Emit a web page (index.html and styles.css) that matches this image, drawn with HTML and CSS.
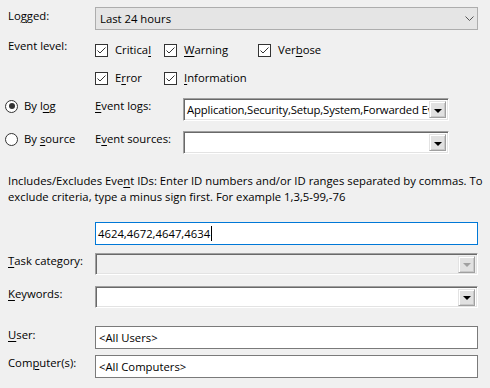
FILE: index.html
```html
<!DOCTYPE html>
<html>
<head>
<meta charset="utf-8">
<link rel="stylesheet" href="styles.css">
</head>
<body>
<div class="dlg">
  <div class="row row-logged">
    <div class="lbl">Lo<u>g</u>ged:</div>
    <div class="flat-select">
      <span class="val">Last 24 hours</span>
      <svg class="chev" width="9" height="5" viewBox="0 0 9 5"><path d="M0.5 0.5 L4.5 4.5 L8.5 0.5" fill="none" stroke="#555" stroke-width="1"/></svg>
    </div>
  </div>

  <div class="row row-level">
    <div class="lbl">Event level:</div>
    <div class="checks">
      <div class="chk"><span class="box"><svg width="11" height="11" viewBox="0 0 11 11"><path d="M1.5 5.5 L4 8 L9.5 2.5" fill="none" stroke="#333" stroke-width="1"/></svg></span><span>Critica<u>l</u></span></div>
      <div class="chk"><span class="box"><svg width="11" height="11" viewBox="0 0 11 11"><path d="M1.5 5.5 L4 8 L9.5 2.5" fill="none" stroke="#333" stroke-width="1"/></svg></span><span><u>W</u>arning</span></div>
      <div class="chk"><span class="box"><svg width="11" height="11" viewBox="0 0 11 11"><path d="M1.5 5.5 L4 8 L9.5 2.5" fill="none" stroke="#333" stroke-width="1"/></svg></span><span>Ver<u>b</u>ose</span></div>
      <div class="chk"><span class="box"><svg width="11" height="11" viewBox="0 0 11 11"><path d="M1.5 5.5 L4 8 L9.5 2.5" fill="none" stroke="#333" stroke-width="1"/></svg></span><span>E<u>r</u>ror</span></div>
      <div class="chk"><span class="box"><svg width="11" height="11" viewBox="0 0 11 11"><path d="M1.5 5.5 L4 8 L9.5 2.5" fill="none" stroke="#333" stroke-width="1"/></svg></span><span><u>I</u>nformation</span></div>
    </div>
  </div>

  <div class="src-grid">
    <div class="radio"><span class="circ on"></span><span>By l<u>o</u>g</span></div>
    <div class="lbl2"><u>E</u>vent logs:</div>
    <div class="combo3d"><span class="val clip tight">Application,Security,Setup,System,Forwarded Events</span><span class="btn3d"><span class="tri"></span></span></div>

    <div class="radio"><span class="circ"></span><span>By <u>s</u>ource</span></div>
    <div class="lbl2">E<u>v</u>ent sources:</div>
    <div class="combo3d"><span class="val clip"></span><span class="btn3d"><span class="tri"></span></span></div>
  </div>

  <p class="desc">Includes/Excludes Eve<u>n</u>t IDs: Enter ID numbers and/or ID ranges separated by commas. To<br>exclude criteria, type a minus sign first. For example 1,3,5-99,-76</p>

  <div class="row row-ids">
    <div class="lbl"></div>
    <div class="textbox focus"><span class="val">4624,4672,4647,4634</span><span class="caret"></span></div>
  </div>

  <div class="row row-task">
    <div class="lbl"><u>T</u>ask category:</div>
    <div class="combo3d disabled"><span class="val clip"></span><span class="btn3d"><span class="tri"></span></span></div>
  </div>

  <div class="row row-kw">
    <div class="lbl"><u>K</u>eywords:</div>
    <div class="combo3d"><span class="val clip"></span><span class="btn3d"><span class="tri"></span></span></div>
  </div>

  <div class="row row-user">
    <div class="lbl"><u>U</u>ser:</div>
    <div class="textbox"><span class="val">&lt;All Users&gt;</span></div>
  </div>

  <div class="row row-comp">
    <div class="lbl">Com<u>p</u>uter(s):</div>
    <div class="textbox"><span class="val">&lt;All Computers&gt;</span></div>
  </div>
</div>
</body>
</html>
```

FILE: styles.css
```css
html, body {
  margin: 0;
  padding: 0;
  background: #f0f0f0;
}
body {
  font-family: "Open Sans", "Noto Sans", sans-serif;
  font-size: 11.3px;
  color: #000;
}
u {
  text-decoration-thickness: 1px;
  text-underline-offset: 1.5px;
}
.dlg {
  width: 470px;
  padding: 7px 12px 0 8px;
  display: flex;
  flex-direction: column;
}
.row {
  display: flex;
  align-items: flex-start;
}
.lbl {
  width: 87px;
  flex: none;
  line-height: 16px;
  white-space: nowrap;
}
.row-logged .lbl { margin-top: 1px; }

.flat-select {
  flex: 1;
  height: 23px;
  box-sizing: border-box;
  border: 1px solid #adadad;
  background: #e5e5e5;
  display: flex;
  align-items: center;
  padding: 0 3px 0 4px;
}
.flat-select .val { flex: 1; }
.chev { display: block; }

.row-level { margin-top: 8px; }
.checks {
  flex: 1;
  display: grid;
  grid-template-columns: 69px 94px 1fr;
  row-gap: 12px;
  padding-top: 4px;
}
.chk {
  display: flex;
  align-items: center;
  height: 16px;
  line-height: 16px;
  white-space: nowrap;
}
.box {
  width: 13px;
  height: 13px;
  box-sizing: border-box;
  border: 1px solid #333;
  background: #fff;
  margin-right: 7px;
  display: flex;
  align-items: center;
  justify-content: center;
}
.box svg { display: block; }

.src-grid {
  margin-top: 12px;
  margin-left: -3px;
  display: grid;
  grid-template-columns: 90px 88px 266px;
  grid-template-rows: 23px 23px;
  row-gap: 10px;
}
.radio {
  display: flex;
  align-items: center;
  height: 16px;
  line-height: 16px;
  white-space: nowrap;
}
.circ {
  width: 13px;
  height: 13px;
  box-sizing: border-box;
  border: 1px solid #333;
  border-radius: 50%;
  background: #fff;
  margin-right: 6px;
  position: relative;
  flex: none;
}
.circ.on::after {
  content: "";
  position: absolute;
  left: 2.5px;
  top: 2.5px;
  width: 6px;
  height: 6px;
  border-radius: 50%;
  background: #333;
}
.lbl2 {
  line-height: 16px;
  white-space: nowrap;
}

.combo3d {
  height: 23px;
  box-sizing: border-box;
  border-style: solid;
  border-width: 1px;
  border-color: #a0a0a0 #fff #fff #a0a0a0;
  box-shadow: inset 1px 1px 0 #696969, inset -1px -1px 0 #e3e3e3;
  background: #fff;
  display: flex;
  align-items: center;
  padding: 1px 2px 1px 2px;
  flex: 1;
  overflow: hidden;
}
.row .combo3d { height: 22px; }
.combo3d .val {
  flex: 1;
  min-width: 0;
  white-space: nowrap;
  overflow: hidden;
  padding-left: 1px;
}
.combo3d .val.tight { letter-spacing: -0.15px; }
.combo3d.disabled { background: #f0f0f0; }
.btn3d {
  flex: none;
  width: 17px;
  height: 17px;
  box-sizing: border-box;
  border-style: solid;
  border-width: 1px;
  border-color: #e3e3e3 #a0a0a0 #a0a0a0 #e3e3e3;
  box-shadow: inset 1px 1px 0 #fff, inset -1px -1px 0 #c8c8c8;
  background: #e1e1e1;
  display: flex;
  align-items: center;
  justify-content: center;
}
.tri {
  width: 0;
  height: 0;
  border-left: 4px solid transparent;
  border-right: 4px solid transparent;
  border-top: 4px solid #000;
  margin-top: 2px;
}
.disabled .tri { border-top-color: #a0a0a0; }

.desc {
  margin: 19px 0 0 0;
  line-height: 16px;
  white-space: nowrap;
}

.textbox {
  flex: 1;
  height: 23px;
  box-sizing: border-box;
  border: 1px solid #7a7a7a;
  background: #fff;
  display: flex;
  align-items: center;
  padding: 0 3px;
}
.textbox.focus {
  border-color: #0078d7;
  padding-left: 2px;
}
.caret {
  width: 1px;
  height: 15px;
  background: #000;
  margin-left: 1px;
}
.row-ids { margin-top: 17px; }
.row-task { margin-top: 8px; }
.row-kw { margin-top: 11px; }
.row-user { margin-top: 18px; }
.row-user .lbl { margin-top: 1px; }
.row-comp { margin-top: 6px; }
```
